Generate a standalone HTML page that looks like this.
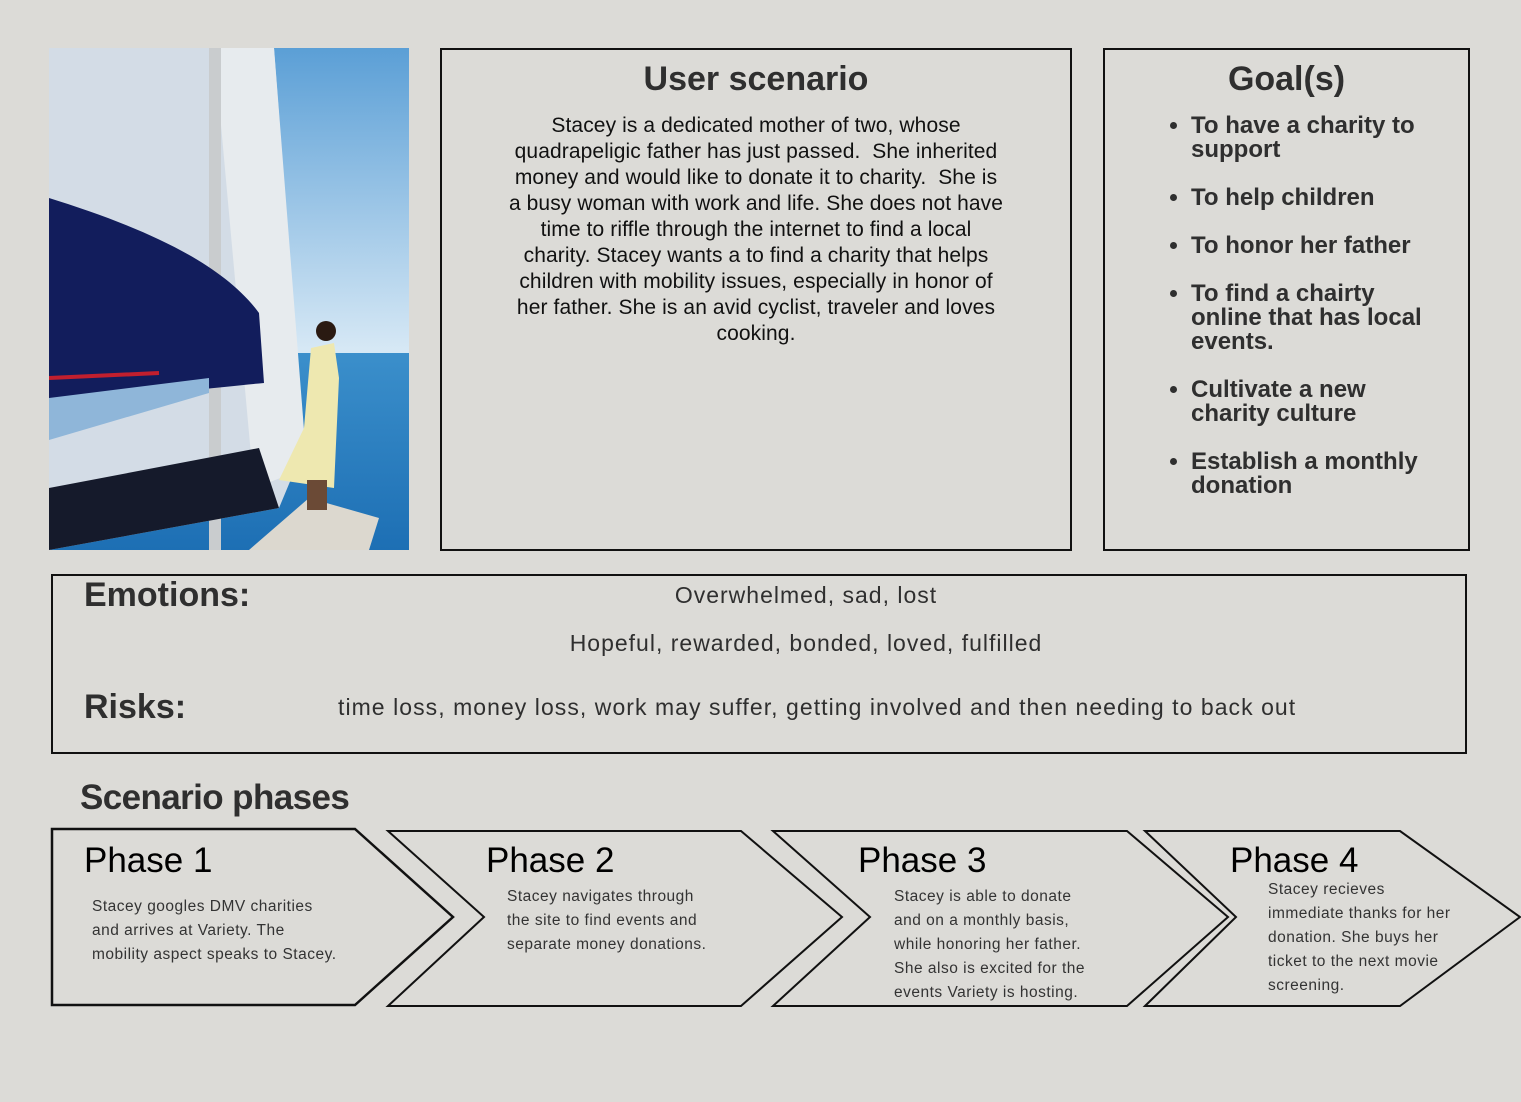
<!DOCTYPE html>
<html><head><meta charset="utf-8"><style>
body{margin:0;width:1521px;height:1102px;background:#dcdbd7;font-family:"Liberation Sans",sans-serif;color:#2f2f2f;position:relative;overflow:hidden}
.a{position:absolute}
.box{position:absolute;border:2px solid #111;box-sizing:border-box}
h2{margin:0;font-size:34px;font-weight:bold;text-align:center}
ul{margin:0;padding:0 0 0 30px;font-weight:bold;font-size:24px;line-height:24px;width:240px}
li{margin-bottom:24px}
.pt{position:absolute;font-size:35px;color:#000}
.pd{position:absolute;font-size:15.5px;line-height:24px;color:#333;letter-spacing:.5px;white-space:nowrap}
.t23{font-size:23px;letter-spacing:1px}
</style></head><body>
<svg class="a" style="left:49px;top:48px" width="360" height="502" viewBox="0 0 360 502">
<defs><linearGradient id="sky" x1="0" y1="0" x2="0" y2="1"><stop offset="0" stop-color="#5b9fd6"/><stop offset=".6" stop-color="#d6e8f5"/><stop offset="1" stop-color="#9fcbea"/></linearGradient>
<linearGradient id="sea" x1="0" y1="0" x2="0" y2="1"><stop offset="0" stop-color="#3b8fcb"/><stop offset="1" stop-color="#1d6fb4"/></linearGradient></defs>
<rect width="360" height="502" fill="url(#sky)"/>
<rect y="305" width="360" height="197" fill="url(#sea)"/>
<polygon points="0,0 225,0 255,400 230,460 0,502" fill="#d3dce6"/>
<polygon points="165,0 225,0 258,420 205,440" fill="#e7ebee"/>
<rect x="160" y="0" width="12" height="502" fill="#c9ccce"/>
<path d="M0,150 C80,175 170,210 210,265 L215,335 C160,340 80,350 0,355Z" fill="#121d5c"/>
<path d="M0,330 L110,325" stroke="#c21f2e" stroke-width="4"/>
<polygon points="0,350 160,330 160,345 0,392" fill="#8fb6d9"/>
<polygon points="0,440 210,400 230,460 0,502" fill="#151a2b"/>
<polygon points="200,502 260,450 330,470 320,502" fill="#dcd8cf"/>
<circle cx="277" cy="283" r="10" fill="#2a1a12"/>
<path d="M262,300 L285,295 L290,330 L285,440 L230,432 L255,380Z" fill="#eee8b0"/>
<rect x="258" y="432" width="20" height="30" fill="#6b4a36"/>
</svg>
<div class="box" style="left:440px;top:48px;width:632px;height:503px">
<h2 style="margin-top:10px">User scenario</h2>
<div style="margin:14px 0 0;text-align:center;font-size:21px;letter-spacing:.1px;line-height:26px;color:#111;white-space:nowrap">Stacey is a dedicated mother of two, whose<br>quadrapeligic father has just passed.&nbsp; She inherited<br>money and would like to donate it to charity.&nbsp; She is<br>a busy woman with work and life. She does not have<br>time to riffle through the internet to find a local<br>charity. Stacey wants a to find a charity that helps<br>children with mobility issues, especially in honor of<br>her father. She is an avid cyclist, traveler and loves<br>cooking.</div>
</div>
<div class="box" style="left:1103px;top:48px;width:367px;height:503px">
<h2 style="margin-top:10px">Goal(s)</h2>
<ul style="margin:15px 0 0 56px">
<li>To have a charity to support</li><li>To help children</li><li>To honor her father</li><li>To find a chairty online that has local events.</li><li>Cultivate a new charity culture</li><li>Establish a monthly donation</li></ul>
</div>
<div class="box" style="left:51px;top:574px;width:1416px;height:180px"></div>
<div class="a" style="left:84px;top:576px;font-size:34px;font-weight:bold">Emotions:</div>
<div class="a t23" style="left:0;width:1612px;top:582px;text-align:center">Overwhelmed, sad, lost</div>
<div class="a t23" style="left:0;width:1612px;top:630px;text-align:center">Hopeful, rewarded, bonded, loved, fulfilled</div>
<div class="a" style="left:84px;top:688px;font-size:34px;font-weight:bold">Risks:</div>
<div class="a t23" style="left:338px;top:694px;letter-spacing:1.05px">time loss, money loss, work may suffer, getting involved and then needing to back out</div>
<div class="a" style="left:80px;top:778px;font-size:35px;font-weight:bold;letter-spacing:-.6px">Scenario phases</div>
<svg class="a" style="left:0;top:0" width="1521" height="1102">
<g fill="none" stroke="#111" stroke-width="2">
<polygon points="52,829 355,829 453,917 355,1005 52,1005" stroke-width="2.5"/>
<polygon points="388,831 741,831 842,917 741,1006 388,1006 484,917"/>
<polygon points="773,831 1127,831 1228,917 1127,1006 773,1006 870,917"/>
<polygon points="1145,831 1400,831 1520,917 1400,1006 1145,1006 1236,917"/>
</g></svg>
<div class="pt" style="left:84px;top:841px">Phase 1</div>
<div class="pt" style="left:486px;top:841px">Phase 2</div>
<div class="pt" style="left:858px;top:841px">Phase 3</div>
<div class="pt" style="left:1230px;top:841px">Phase 4</div>
<div class="pd" style="left:92px;top:895px">Stacey googles DMV charities<br>and arrives at Variety. The<br>mobility aspect speaks to Stacey.</div>
<div class="pd" style="left:507px;top:885px">Stacey navigates through<br>the site to find events and<br>separate money donations.</div>
<div class="pd" style="left:894px;top:885px">Stacey is able to donate<br>and on a monthly basis,<br>while honoring her father.<br>She also is excited for the<br>events Variety is hosting.</div>
<div class="pd" style="left:1268px;top:878px">Stacey recieves<br>immediate thanks for her<br>donation. She buys her<br>ticket to the next movie<br>screening.</div>
</body></html>
